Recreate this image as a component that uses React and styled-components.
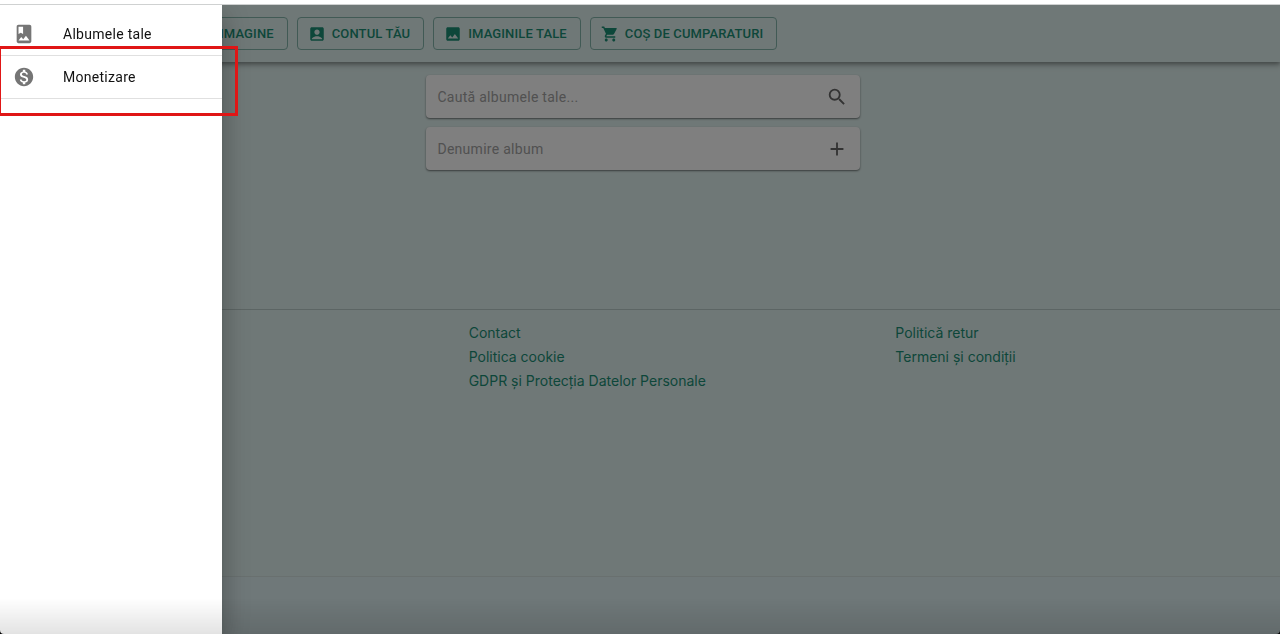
import React from "react";
import styled, { createGlobalStyle } from "styled-components";
import {
  MdAccountBox,
  MdAdd,
  MdAddPhotoAlternate,
  MdImage,
  MdMonetizationOn,
  MdSearch,
  MdShoppingCart,
} from "react-icons/md";

const GlobalStyle = createGlobalStyle`
  *, *::before, *::after { box-sizing: border-box; }
  body {
    margin: 0;
    background: #dff0ee;
    font-family: Roboto, "Liberation Sans", sans-serif;
  }
`;

const Page = styled.div`
  display: flex;
  flex-direction: column;
  min-height: 100vh;
  padding-top: 5px;
`;

const TopEdge = styled.div`
  position: fixed;
  inset: 0 0 auto;
  z-index: 5;
  height: 5px;
  background: #fff;
  border-bottom: 1px solid #cfd1d1;
`;

const AppBar = styled.header`
  display: flex;
  align-items: center;
  gap: 9px;
  height: 57px;
  padding: 0 16px 0 185px;
  background: #dff0ee;
  box-shadow: 0 2px 4px rgba(0, 0, 0, 0.3), 0 4px 6px rgba(0, 0, 0, 0.14);
`;

const NavButton = styled.button`
  display: flex;
  align-items: center;
  gap: 6px;
  height: 33px;
  padding: 0 13px 0 10px;
  border: 1px solid #82b4aa;
  border-radius: 4px;
  background: transparent;
  color: #1a8e75;
  font: 500 13px/20px Roboto, "Liberation Sans", sans-serif;
  letter-spacing: 0.01em;
  text-transform: uppercase;
  white-space: nowrap;
  cursor: pointer;

  svg {
    width: 18px;
    height: 18px;
    flex: none;
  }
`;

const Main = styled.main`
  display: flex;
  flex-direction: column;
  align-items: center;
  gap: 9px;
  min-height: 247px;
  padding: 13px 0 0 6px;
`;

const FieldCard = styled.form`
  display: flex;
  align-items: center;
  width: 34%;
  min-width: 260px;
  height: 43px;
  padding: 0 12px 0 11px;
  border-radius: 4px;
  background: #fff;
  box-shadow: 0 1px 2px rgba(0, 0, 0, 0.5);
`;

const Field = styled.input`
  flex: 1;
  min-width: 0;
  padding: 0;
  border: 0;
  outline: 0;
  background: transparent;
  font: 400 14px/20px Roboto, "Liberation Sans", sans-serif;
  letter-spacing: 0.02em;

  &::placeholder {
    color: #a2a2a2;
    opacity: 1;
  }
`;

const IconButton = styled.button`
  display: flex;
  padding: 0;
  border: 0;
  background: transparent;
  color: #666;
  cursor: pointer;

  svg {
    width: 22px;
    height: 22px;
  }
`;

const Footer = styled.footer`
  display: grid;
  grid-template-columns: repeat(3, 1fr);
  align-items: start;
  flex: 1;
  padding: 11px 0;
  border-top: 1px solid #b9cac8;
`;

const LinkColumn = styled.nav`
  display: flex;
  flex-direction: column;
  align-items: flex-start;
  grid-column: ${({ $column }) => $column};
  padding-left: 42px;
`;

const FooterLink = styled.a`
  color: #1a8e75;
  font: 400 14px/24px Inter, "Liberation Sans", sans-serif;
  text-decoration: none;
`;

const BottomBar = styled.div`
  height: 58px;
  border-top: 1px solid #d2e0df;
  background: #dff0f2;
`;

const Backdrop = styled.div`
  position: fixed;
  inset: 5px 0 0;
  z-index: 1;
  background: rgba(0, 0, 0, 0.5);
`;

const Drawer = styled.aside`
  position: fixed;
  inset: 5px auto 0 0;
  z-index: 2;
  width: 222px;
  padding-top: 8px;
  background: #fff;
  box-shadow: 0 8px 10px -5px rgba(0, 0, 0, 0.2),
    0 16px 24px 2px rgba(0, 0, 0, 0.14), 0 6px 30px 5px rgba(0, 0, 0, 0.12);
`;

const DrawerList = styled.ul`
  margin: 0;
  padding: 0;
  list-style: none;
`;

const DrawerItem = styled.li`
  border-bottom: 1px solid #e0e0e0;
`;

const DrawerLink = styled.a`
  display: flex;
  align-items: center;
  gap: 28px;
  height: 42px;
  padding: 0 13px;
  color: #111;
  font-size: 14px;
  line-height: 20px;
  letter-spacing: 0.02em;
  text-decoration: none;

  svg {
    width: 22px;
    height: 22px;
    color: #757575;
  }
`;

const Highlight = styled.div`
  position: fixed;
  top: 46px;
  left: -2px;
  z-index: 3;
  width: 240px;
  height: 70px;
  border: 3px solid #e01616;
  pointer-events: none;
`;

const WindowShade = styled.div`
  position: fixed;
  inset: auto 0 0;
  z-index: 4;
  height: 36px;
  background: linear-gradient(to bottom, transparent, rgba(0, 0, 0, 0.11));
  pointer-events: none;
`;

const Corner = styled.svg`
  position: fixed;
  bottom: 0;
  ${({ $side }) => $side}: 0;
  z-index: 5;
  width: 4px;
  height: 4px;
`;

function AlbumIcon() {
  return (
    <svg viewBox="0 0 24 24" fill="currentColor" aria-hidden="true">
      <path d="M18 2H6c-1.1 0-2 .9-2 2v16c0 1.1.9 2 2 2h12c1.1 0 2-.9 2-2V4c0-1.1-.9-2-2-2zM6 4h5v8l-2.5-1.5L6 12V4zm0 15l3-3.86 2.14 2.58 3-3.86L18 19H6z" />
    </svg>
  );
}

const navItems = [
  { label: "Imagine", Icon: MdAddPhotoAlternate },
  { label: "Contul tău", Icon: MdAccountBox },
  { label: "Imaginile tale", Icon: MdImage },
  { label: "Coș de cumparaturi", Icon: MdShoppingCart },
];

const fields = [
  { label: "Caută albumele tale...", action: "Caută", Icon: MdSearch },
  { label: "Denumire album", action: "Adaugă", Icon: MdAdd },
];

const footerColumns = [
  {
    column: 2,
    links: ["Contact", "Politica cookie", "GDPR și Protecția Datelor Personale"],
  },
  { column: 3, links: ["Politică retur", "Termeni și condiții"] },
];

const drawerItems = [
  { label: "Albumele tale", Icon: AlbumIcon },
  { label: "Monetizare", Icon: MdMonetizationOn },
];

export default function App() {
  return (
    <>
      <GlobalStyle />
      <Page>
        <AppBar>
          {navItems.map(({ label, Icon }) => (
            <NavButton key={label} type="button">
              <Icon />
              {label}
            </NavButton>
          ))}
        </AppBar>
        <Main>
          {fields.map(({ label, action, Icon }) => (
            <FieldCard key={label} onSubmit={(e) => e.preventDefault()}>
              <Field type="text" placeholder={label} aria-label={label} />
              <IconButton type="submit" aria-label={action}>
                <Icon />
              </IconButton>
            </FieldCard>
          ))}
        </Main>
        <Footer>
          {footerColumns.map(({ column, links }) => (
            <LinkColumn key={column} $column={column}>
              {links.map((text) => (
                <FooterLink key={text} href="#">
                  {text}
                </FooterLink>
              ))}
            </LinkColumn>
          ))}
        </Footer>
        <BottomBar />
      </Page>
      <Backdrop />
      <Drawer>
        <DrawerList>
          {drawerItems.map(({ label, Icon }) => (
            <DrawerItem key={label}>
              <DrawerLink href="#">
                <Icon />
                {label}
              </DrawerLink>
            </DrawerItem>
          ))}
        </DrawerList>
      </Drawer>
      <Highlight />
      <WindowShade />
      <TopEdge />
      <Corner $side="left" viewBox="0 0 4 4" aria-hidden="true">
        <path d="M0 0Q0 4 4 4H0Z" />
      </Corner>
      <Corner $side="right" viewBox="0 0 4 4" aria-hidden="true">
        <path d="M4 0Q4 4 0 4H4Z" />
      </Corner>
    </>
  );
}
